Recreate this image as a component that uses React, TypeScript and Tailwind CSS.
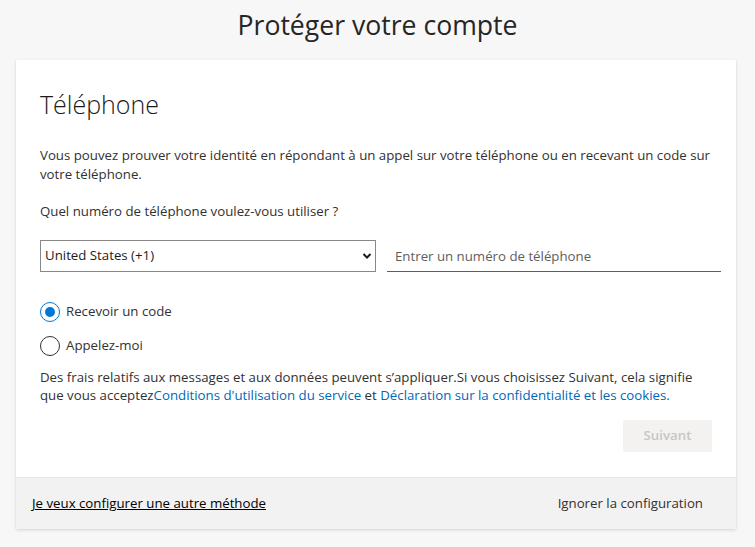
import React, { useState } from "react";

const font = { fontFamily: '"Open Sans", "Noto Sans", sans-serif' };

function Radio({ checked, label, onClick }: { checked: boolean; label: string; onClick: () => void }) {
  return (
    <button type="button" onClick={onClick} className="flex items-center gap-[6px] h-5 text-[13.25px] text-[#323130]">
      <span
        className={
          "flex items-center justify-center w-5 h-5 rounded-full border " +
          (checked ? "border-[#0078d4]" : "border-[#323130]")
        }
      >
        {checked && <span className="w-[10px] h-[10px] rounded-full bg-[#0078d4]" />}
      </span>
      <span>{label}</span>
    </button>
  );
}

export default function App() {
  const [method, setMethod] = useState("code");
  const [phone, setPhone] = useState("");

  return (
    <div className="min-h-[547px] w-[755px] bg-[#f7f7f7] text-[#1b1b1b]" style={font}>
      <div className="flex h-[60px] items-start justify-center pt-[5px]">
        <h1 className="text-[26.6px] leading-[40px] text-[#262626]">Protéger votre compte</h1>
      </div>

      <div className="mx-4 w-[720px] bg-white shadow-[0_1px_3px_rgba(0,0,0,0.15)]">
        <div className="px-6 pt-[28px] pb-[25px]">
          <h2 className="text-[25px] font-light leading-[32px] text-[#1b1b1b]">Téléphone</h2>

          <p className="mt-[26px] text-[13.25px] leading-[19px] text-[#323130]">
            Vous pouvez prouver votre identité en répondant à un appel sur votre téléphone ou en recevant un code sur
            votre téléphone.
          </p>

          <p className="mt-[18px] text-[13.25px] leading-[19px] text-[#323130]">
            Quel numéro de téléphone voulez-vous utiliser ?
          </p>

          <div className="mt-[19px] -mr-[9px] flex items-end">
            <div className="relative w-[336px]">
              <select className="h-8 w-full appearance-none border border-[#8a8886] bg-white pl-1 text-[13.25px] text-[#1b1b1b] outline-none">
                <option>United States (+1)</option>
                <option>France (+33)</option>
                <option>Canada (+1)</option>
              </select>
              <svg
                className="pointer-events-none absolute right-[4px] top-[12px]"
                width="10"
                height="8"
                viewBox="0 0 10 8"
              >
                <path d="M1.5 2 L5 5.5 L8.5 2" fill="none" stroke="#1b1b1b" strokeWidth="2" />
              </svg>
            </div>
            <input
              value={phone}
              onChange={(e) => setPhone(e.target.value)}
              placeholder="Entrer un numéro de téléphone"
              className="ml-[11px] h-8 flex-1 border-b border-[#605e5c] px-2 text-[13.25px] text-[#1b1b1b] outline-none placeholder:text-[#605e5c]"
            />
          </div>

          <div className="mt-[30px] flex flex-col items-start gap-[14px]">
            <Radio checked={method === "code"} label="Recevoir un code" onClick={() => setMethod("code")} />
            <Radio checked={method === "call"} label="Appelez-moi" onClick={() => setMethod("call")} />
          </div>

          <p className="mt-[12px] text-[13.25px] leading-[18px] text-[#323130]">
            Des frais relatifs aux messages et aux données peuvent s’appliquer.Si vous choisissez Suivant, cela signifie
            que vous acceptez
            <a href="#" className="text-[#0067b8]">Conditions d'utilisation du service</a> et{" "}
            <a href="#" className="text-[#0067b8]">Déclaration sur la confidentialité et les cookies</a>
            <span className="text-[#0067b8]">.</span>
          </p>

          <div className="mt-4 flex justify-end">
            <button
              type="button"
              disabled
              className="h-8 w-[89px] rounded-[2px] bg-[#f3f2f1] text-[13.25px] font-semibold text-[#c8c6c4]"
            >
              Suivant
            </button>
          </div>
        </div>

        <div className="flex h-[52px] items-center justify-between border-t border-[#e6e6e6] bg-[#f2f2f2] pl-4 pr-[33px] text-[13.25px]">
          <a href="#" className="text-black underline">Je veux configurer une autre méthode</a>
          <a href="#" className="text-[#323130]">Ignorer la configuration</a>
        </div>
      </div>
    </div>
  );
}
